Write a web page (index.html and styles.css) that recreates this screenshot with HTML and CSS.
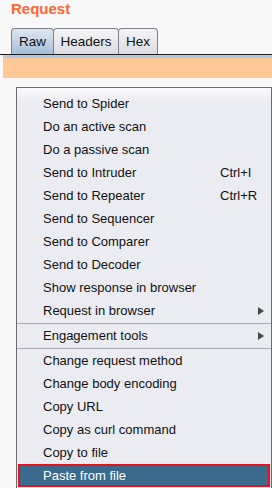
FILE: index.html
```html
<!DOCTYPE html>
<html>
<head>
<meta charset="utf-8">
<link rel="stylesheet" href="styles.css">
</head>
<body>
<div class="title">Request</div>
<div class="tabs">
  <div class="tab tab-raw selected">Raw</div>
  <div class="tab tab-headers">Headers</div>
  <div class="tab tab-hex">Hex</div>
</div>
<div class="tabline"></div>
<div class="band"></div>
<div class="peach"></div>
<div class="menu">
  <div class="item"><span>Send to Spider</span></div>
  <div class="item"><span>Do an active scan</span></div>
  <div class="item"><span>Do a passive scan</span></div>
  <div class="item"><span>Send to Intruder</span><span class="key">Ctrl+I</span></div>
  <div class="item"><span>Send to Repeater</span><span class="key">Ctrl+R</span></div>
  <div class="item"><span>Send to Sequencer</span></div>
  <div class="item"><span>Send to Comparer</span></div>
  <div class="item"><span>Send to Decoder</span></div>
  <div class="item"><span>Show response in browser</span></div>
  <div class="item"><span>Request in browser</span><span class="key"></span><svg class="arrow" width="6" height="8" viewBox="0 0 6 8"><path d="M0 0 L6 4 L0 8 Z" fill="#474747"/></svg></div>
  <div class="sep"></div>
  <div class="item"><span>Engagement tools</span><span class="key"></span><svg class="arrow" width="6" height="8" viewBox="0 0 6 8"><path d="M0 0 L6 4 L0 8 Z" fill="#474747"/></svg></div>
  <div class="sep"></div>
  <div class="item"><span>Change request method</span></div>
  <div class="item"><span>Change body encoding</span></div>
  <div class="item"><span>Copy URL</span></div>
  <div class="item"><span>Copy as curl command</span></div>
  <div class="item"><span>Copy to file</span></div>
  <div class="item active"><span>Paste from file</span></div>
</div>
</body>
</html>
```

FILE: styles.css
```css
html, body {
  margin: 0;
  padding: 0;
}
body {
  width: 272px;
  height: 488px;
  overflow: hidden;
  background: #f8f8f8;
  font-family: "Liberation Sans", Arial, sans-serif;
  color: #111;
}
.title {
  height: 18px;
  line-height: 18px;
  padding-left: 11px;
  margin-bottom: 10px;
  font-size: 15px;
  font-weight: bold;
  color: #ff6633;
}
.tabs {
  display: flex;
  height: 26px;
  padding-left: 11px;
}
.tab {
  box-sizing: border-box;
  height: 26px;
  border: 1px solid #7d828a;
  border-bottom: none;
  border-radius: 4px 4px 0 0;
  background: linear-gradient(#f6f6f8, #dadbe1);
  font-size: 13.5px;
  line-height: 26px;
  text-align: center;
  color: #111;
}
.tab + .tab {
  margin-left: -1px;
}
.tab-raw { width: 43px; }
.tab-headers { width: 66px; }
.tab-hex { width: 40px; }
.tab.selected {
  background: linear-gradient(#dfe8f1, #a7bed5);
}
.tabline {
  height: 1px;
  background: #1e1e1e;
}
.band {
  height: 3px;
  margin-left: 3px;
  background: #b4c8dc;
}
.peach {
  height: 20px;
  margin-left: 3px;
  background: #ffc897;
}
.menu {
  box-sizing: border-box;
  margin: 9px 0 0 16px;
  width: 256px;
  border: 1px solid #6a6a6a;
  padding-top: 4px;
  height: 420px;
  background: linear-gradient(#fbfbfc, #ebecf1 14px);
}
.item {
  display: grid;
  grid-template-columns: 177px 1fr 6px;
  align-items: center;
  height: 23px;
  padding: 0 7px 0 26px;
  font-size: 13px;
  color: #111;
}
.key {
  white-space: nowrap;
}
.sep {
  height: 1px;
  margin-top: 1px;
  background: #a9aab2;
}
.item.active {
  box-sizing: border-box;
  margin: 0 1px;
  padding-left: 23px;
  border: 2px solid #e3121b;
  background: #3b6a8c;
  color: #fff;
}
```
